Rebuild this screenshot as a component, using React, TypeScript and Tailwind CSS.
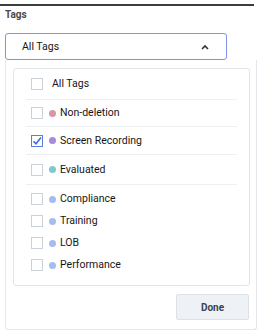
const tags = [
  { name: 'Non-deletion', color: '#d895a3', checked: false },
  { name: 'Screen Recording', color: '#a88ad9', checked: true },
  { name: 'Evaluated', color: '#7fc9d1', checked: false },
];

const groups = [
  { name: 'Compliance', color: '#a4bdf0' },
  { name: 'Training', color: '#a4bdf0' },
  { name: 'LOB', color: '#a4bdf0' },
  { name: 'Performance', color: '#a4bdf0' },
];

const Checkbox = ({ checked }: { checked?: boolean }) => (
  <span
    className={`w-[12px] h-[12px] shrink-0 border flex items-center justify-center ${
      checked ? 'border-[#5a7ee0]' : 'border-[#c9d1dc]'
    }`}
  >
    {checked && (
      <svg width="10" height="10" viewBox="0 0 10 10">
        <path d="M1.5 5.2 L4 7.8 L9 1.5" fill="none" stroke="#3f6ad8" strokeWidth="1.6" />
      </svg>
    )}
  </span>
);

const Row = ({ name, color, checked, h }: { name: string; color?: string; checked?: boolean; h: string }) => (
  <div className={`flex items-center pl-[17px] ${h}`}>
    <Checkbox checked={checked} />
    {color ? (
      <>
        <span className="w-[7px] h-[7px] rounded-full ml-[6px]" style={{ backgroundColor: color }} />
        <span className="ml-[4px]">{name}</span>
      </>
    ) : (
      <span className="ml-[9px]">{name}</span>
    )}
  </div>
);

const App = () => {
  return (
    <div
      className="w-[266px] h-[334px] bg-white overflow-hidden text-[10.5px] text-[#161616]"
      style={{ fontFamily: 'Roboto, "Liberation Sans", Arial, sans-serif' }}
    >
      <div className="w-[254px] h-[2px] mt-[4px] bg-[#3d3d3d]" />
      <div className="pl-[5px] mt-[2px] h-[14px] leading-[14px] font-bold text-[10px] text-[#4a4a4a]">Tags</div>

      <div className="ml-[5px] mt-[11px] w-[222px] h-[27px] border border-[#7f94e4] rounded-[3px] flex items-center justify-between pl-[16px] pr-[17px]">
        <span>All Tags</span>
        <svg width="8" height="6" viewBox="0 0 8 6">
          <path d="M1 5 L4 2 L7 5" fill="none" stroke="#333" strokeWidth="1.6" />
        </svg>
      </div>

      <div className="ml-[5px] w-[252px] h-[270px] border border-t-0 border-[#e3e6ea] rounded-b-[3px] pt-[8px] px-[7px]">
        <div className="w-[237px] h-[218px] border border-[#e1e5ea] rounded-[3px]">
          <Row name="All Tags" h="h-[30px]" />
          {tags.map((t) => (
            <div key={t.name}>
              <div className="mx-[12px] h-px bg-[#edf0f3]" />
              <Row name={t.name} color={t.color} checked={t.checked} h={t.name === 'Non-deletion' ? 'h-[26px]' : t.name === 'Evaluated' ? 'h-[29px]' : 'h-[27px]'} />
            </div>
          ))}
          <div className="mx-[12px] h-px bg-[#edf0f3]" />
          <div className="pt-[3px]">
            {groups.map((g) => (
              <Row key={g.name} name={g.name} color={g.color} h="h-[22px]" />
            ))}
          </div>
        </div>
        <div className="flex justify-end mt-[8px]">
          <button className="w-[73px] h-[26px] border border-[#dde1e6] rounded-[2px] bg-[#eef1f5] font-bold text-[10px] text-[#3a4350]">
            Done
          </button>
        </div>
      </div>
    </div>
  );
};

export default App;
